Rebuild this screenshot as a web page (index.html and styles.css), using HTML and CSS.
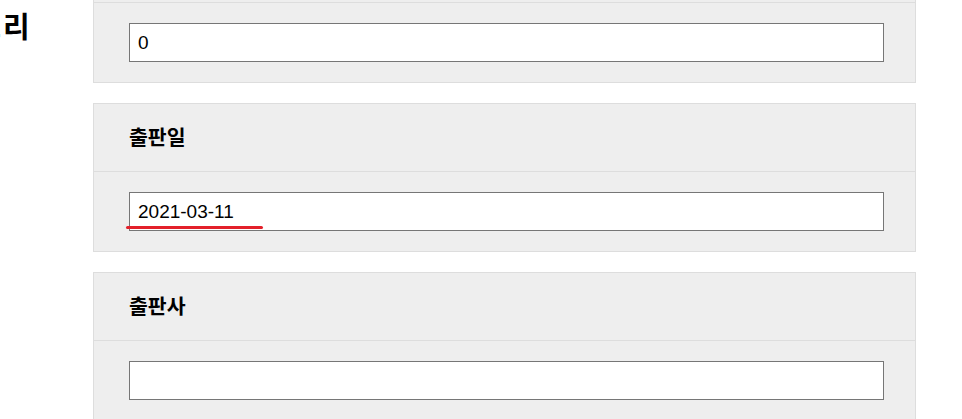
FILE: index.html
```html
<!DOCTYPE html>
<html lang="ko">
<head>
<meta charset="utf-8">
<title>도서 등록</title>
<link rel="stylesheet" href="styles.css">
</head>
<body>
<div class="page">
  <aside class="side">
    <h2 class="side-title">카테고리</h2>
  </aside>
  <main class="fields">
    <section class="card card-first">
      <div class="card-head"></div>
      <div class="card-body">
        <input class="field" type="text" value="0">
      </div>
    </section>
    <section class="card">
      <div class="card-head">출판일</div>
      <div class="card-body">
        <div class="field-wrap">
          <input class="field" type="text" value="2021-03-11">
          <span class="mark"></span>
        </div>
      </div>
    </section>
    <section class="card">
      <div class="card-head">출판사</div>
      <div class="card-body">
        <input class="field" type="text" value="">
      </div>
    </section>
  </main>
</div>
</body>
</html>
```

FILE: styles.css
```css
html, body {
  margin: 0;
  padding: 0;
  background: #ffffff;
  overflow: hidden;
}
body {
  font-family: "Noto Sans CJK KR", "Liberation Sans", sans-serif;
  color: #000;
}
.page {
  display: flex;
  align-items: flex-start;
}
.side {
  width: 93px;
  flex: none;
}
.side-title {
  margin: 5px 0 0 -83px;
  font-size: 29px;
  font-weight: 700;
  line-height: 40px;
  letter-spacing: 2px;
  white-space: nowrap;
}
.fields {
  width: 823px;
  display: flex;
  flex-direction: column;
  gap: 20px;
  margin-top: -66px;
}
.card {
  background: #eeeeee;
  border: 1px solid #dddddd;
}
.card-head {
  height: 68px;
  display: flex;
  align-items: center;
  padding: 0 0 3px 35px;
  box-sizing: border-box;
  font-size: 20.5px;
  font-weight: 700;
  border-bottom: 1px solid #dddddd;
}
.card-body {
  padding: 20px 31px 20px 35px;
}
.field-wrap {
  position: relative;
}
.field {
  display: block;
  width: 100%;
  height: 39px;
  box-sizing: border-box;
  margin: 0;
  padding: 1px 8px 0;
  border: 1px solid #767676;
  border-radius: 0;
  background: #ffffff;
  font-family: "Liberation Sans", Arial, sans-serif;
  font-size: 19px;
  color: #000;
  outline: none;
}
.mark {
  position: absolute;
  left: -3px;
  top: 34px;
  width: 137px;
  height: 3px;
  border-radius: 2px;
  background: #e3202a;
}
```
